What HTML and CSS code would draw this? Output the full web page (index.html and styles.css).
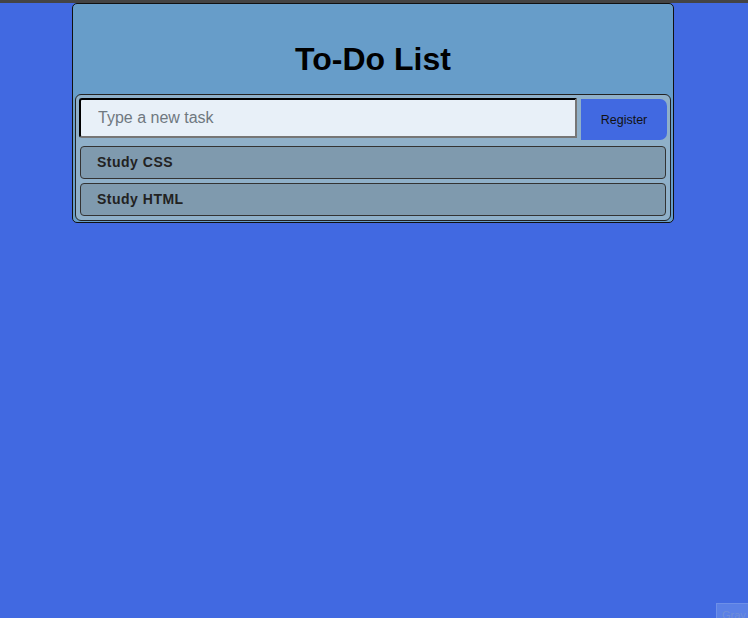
FILE: index.html
```html
<!DOCTYPE html>
<html>
<head>
<meta charset="utf-8">
<link rel="stylesheet" href="styles.css">
</head>
<body>
<div class="topbar"></div>
<div class="app">
  <h1 class="title">To-Do List</h1>
  <div class="panel">
    <form class="entry">
      <input class="task-input" type="text" placeholder="Type a new task">
      <button class="register" type="button">Register</button>
    </form>
    <ul class="tasks">
      <li class="task">Study CSS</li>
      <li class="task">Study HTML</li>
    </ul>
  </div>
</div>
<div class="corner">Grav</div>
</body>
</html>
```
FILE: styles.css
```css
html, body { margin: 0; padding: 0; }
body {
  background: #4169e1;
  font-family: "Liberation Sans", Arial, sans-serif;
  min-height: 618px;
  position: relative;
  overflow: hidden;
}
.topbar { height: 3px; background: #444; }
.app {
  width: 600px;
  margin-left: 72px;
  background: #679dc9;
  border: 1px solid #111;
  border-radius: 5px;
}
.title {
  margin: 0;
  height: 90px;
  box-sizing: border-box;
  padding-top: 37px;
  text-align: center;
  font-size: 32px;
  line-height: 37px;
  font-weight: bold;
  color: #000;
}
.panel {
  margin: 0 2px 1px 2px;
  background: #8fb0c9;
  border: 1px solid #222;
  border-radius: 6px;
  padding: 3px 3px 4px 3px;
}
.entry { display: flex; gap: 4px; margin: 0; }
.task-input {
  flex: 1;
  height: 40px;
  box-sizing: border-box;
  margin: 0;
  border: 2px inset #767676;
  border-top-color: #222;
  border-left-color: #222;
  border-radius: 3px 0 0 3px;
  background: #e8f0f8;
  padding: 0 17px;
  font-family: inherit;
  font-size: 16px;
  color: #333;
}
.task-input::placeholder { color: #6f7880; }
.register {
  width: 86px;
  height: 41px;
  margin: 1px 0 0 0;
  border: none;
  border-radius: 0 7px 7px 0;
  background: #4169e1;
  font-family: inherit;
  font-size: 12.5px;
  color: #111;
}
.tasks { list-style: none; margin: 6px 1px 0 1px; padding: 0; display: flex; flex-direction: column; gap: 4px; }
.task {
  height: 31px;
  line-height: 31px;
  background: #7f9aae;
  border: 1px solid #333;
  border-radius: 4px;
  padding-left: 16px;
  font-size: 14px;
  font-weight: bold;
  color: #222;
  letter-spacing: 0.5px;
}
.corner {
  position: absolute;
  left: 716px;
  top: 603px;
  width: 32px;
  height: 15px;
  background: #5a80e6;
  border: 1px solid #6d8fe8;
  border-right: none;
  border-bottom: none;
  color: #6f8ed8;
  font-size: 11px;
  line-height: 11px;
  padding: 6px 0 0 5px;
  box-sizing: border-box;
  overflow: hidden;
}
```
